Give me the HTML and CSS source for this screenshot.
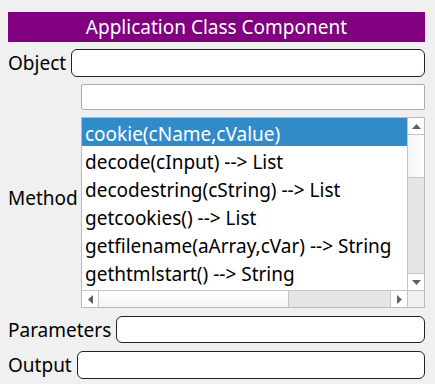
FILE: index.html
```html
<!DOCTYPE html>
<html lang="en">
<head>
  <meta charset="UTF-8" />
  <title>Application Class Component</title>
  <link rel="stylesheet" href="styles.css">
</head>
<body>

  <div class="title-bar">Application Class Component</div>

  <div class="form-row">
    <span class="label">Object</span>
    <div class="text-box"></div>
  </div>

  <div class="method-row">
    <span class="label method-label">Method</span>
    <div class="method-col">
      <div class="filter-box"></div>
      <div class="list-box">
        <div class="list-items">
          <div class="list-item selected">cookie(cName,cValue)</div>
          <div class="list-item">decode(cInput) --&gt; List</div>
          <div class="list-item">decodestring(cString) --&gt; List</div>
          <div class="list-item">getcookies() --&gt; List</div>
          <div class="list-item">getfilename(aArray,cVar) --&gt; String</div>
          <div class="list-item">gethtmlstart() --&gt; String</div>
        </div>
        <div class="vscroll">
          <div class="arrow arrow-top">
            <svg width="9" height="5" viewBox="0 0 9 5"><path d="M0 5 L4.5 0 L9 5 Z" fill="#606060"/></svg>
          </div>
          <div class="vthumb"></div>
          <div class="vtrack"></div>
          <div class="arrow arrow-bottom">
            <svg width="9" height="5" viewBox="0 0 9 5"><path d="M0 0 L4.5 5 L9 0 Z" fill="#606060"/></svg>
          </div>
        </div>
        <div class="hscroll">
          <div class="arrow arrow-left">
            <svg width="5" height="9" viewBox="0 0 5 9"><path d="M5 0 L0 4.5 L5 9 Z" fill="#606060"/></svg>
          </div>
          <div class="hthumb"></div>
          <div class="htrack"></div>
          <div class="arrow arrow-right">
            <svg width="5" height="9" viewBox="0 0 5 9"><path d="M0 0 L5 4.5 L0 9 Z" fill="#606060"/></svg>
          </div>
        </div>
        <div class="corner"></div>
      </div>
    </div>
  </div>

  <div class="form-row params-row">
    <span class="label">Parameters</span>
    <div class="text-box"></div>
  </div>

  <div class="form-row output-row">
    <span class="label">Output</span>
    <div class="text-box"></div>
  </div>

</body>
</html>
```

FILE: styles.css
```css
body {
  margin: 0;
  padding: 12px 10px 0 8px;
  background: #f0f0f0;
  font-family: 'Noto Sans', sans-serif;
  font-size: 19px;
  color: #000;
}

.title-bar {
  height: 30px;
  line-height: 30px;
  background: #800080;
  color: #fff;
  text-align: center;
}

.form-row {
  display: flex;
  align-items: center;
  gap: 5px;
  margin-top: 7px;
  height: 28px;
}

.label {
  white-space: nowrap;
}

.text-box {
  flex: 1;
  height: 100%;
  box-sizing: border-box;
  background: #fff;
  border: 1px solid #222;
  border-radius: 6px;
}

.method-row {
  display: flex;
  align-items: center;
  margin-top: 7px;
}

.method-label {
  width: 73px;
  margin-top: 3px;
}

.method-col {
  flex: 1;
  display: flex;
  flex-direction: column;
  gap: 7px;
}

.filter-box {
  height: 26px;
  box-sizing: border-box;
  background: #fff;
  border: 1px solid #acacac;
  border-radius: 2px;
}

.list-box {
  height: 191px;
  box-sizing: border-box;
  border: 1px solid #b9b9b9;
  background: #fff;
  display: grid;
  grid-template-columns: 1fr 17px;
  grid-template-rows: 1fr 17px;
  overflow: hidden;
}

.list-items {
  overflow: hidden;
  min-width: 0;
}

.list-item {
  height: 24px;
  line-height: 24px;
  padding: 4px 0 0 3px;
  white-space: nowrap;
}

.list-item.selected {
  background: #318bc9;
  color: #fff;
}

.vscroll {
  display: flex;
  flex-direction: column;
  border-left: 1px solid #c4c4c4;
  box-sizing: border-box;
}

.hscroll {
  display: flex;
  border-top: 1px solid #c4c4c4;
  box-sizing: border-box;
}

.arrow {
  display: flex;
  align-items: center;
  justify-content: center;
  background: #fff;
}

.arrow-top,
.arrow-bottom {
  height: 16px;
}

.arrow-top {
  border-bottom: 1px solid #c4c4c4;
}

.arrow-bottom {
  border-top: 1px solid #c4c4c4;
}

.arrow-left,
.arrow-right {
  width: 16px;
}

.arrow-left {
  border-right: 1px solid #c4c4c4;
}

.arrow-right {
  border-left: 1px solid #c4c4c4;
}

.vthumb {
  height: 42px;
  border-bottom: 1px solid #c4c4c4;
  background: linear-gradient(to right, #f4f4f4, #fff);
}

.vtrack {
  flex: 1;
  background: #e6e6e6;
}

.hthumb {
  width: 189px;
  border-right: 1px solid #c4c4c4;
  background: linear-gradient(#fff, #f4f4f4);
}

.htrack {
  flex: 1;
  background: #e6e6e6;
}

.corner {
  background: #f0f0f0;
  border-left: 1px solid #c4c4c4;
  border-top: 1px solid #c4c4c4;
}

.params-row {
  margin-top: 8px;
  height: 27px;
}

.output-row {
  margin-top: 8px;
}
```
